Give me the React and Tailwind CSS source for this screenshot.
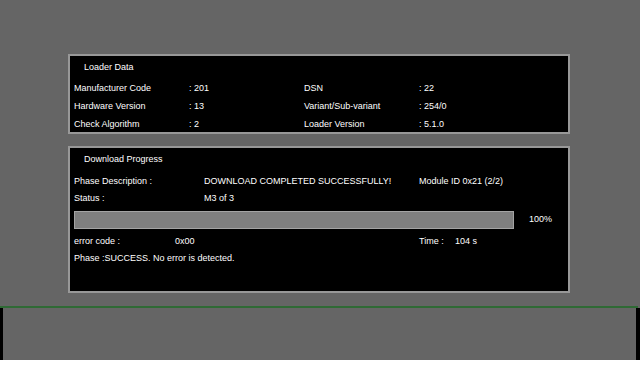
import React from 'react'

const loaderRows = [
  ['Manufacturer Code', ': 201', 'DSN', ': 22'],
  ['Hardware Version', ': 13', 'Variant/Sub-variant', ': 254/0'],
  ['Check Algorithm', ': 2', 'Loader Version', ': 5.1.0'],
]

export default function App() {
  return (
    <div className="w-[640px] h-[392px] bg-white text-[9px] text-white" style={{ fontFamily: '"Liberation Sans", Arial, sans-serif' }}>
      <div className="h-[360px] bg-[#656565] flex flex-col">
        {/* Main screen */}
        <div className="h-[306px] pt-[54px] pl-[68px] flex flex-col gap-[12px]">
          {/* Loader Data */}
          <div className="w-[502px] h-[80px] bg-black border-2 border-[#989898] pt-[4px] pl-[4px] flex flex-col">
            <div className="h-[14px] leading-[14px] pl-[10px]">Loader Data</div>
            <div className="mt-[6px] flex flex-col">
              {loaderRows.map((r) => (
                <div key={r[0]} className="h-[18px] flex items-center">
                  <span className="w-[115px]">{r[0]}</span>
                  <span className="w-[115px]">{r[1]}</span>
                  <span className="w-[115px]">{r[2]}</span>
                  <span>{r[3]}</span>
                </div>
              ))}
            </div>
          </div>

          {/* Download Progress */}
          <div className="w-[502px] h-[147px] bg-black border-2 border-[#989898] pt-[4px] pl-[4px] flex flex-col">
            <div className="h-[14px] leading-[14px] pl-[10px]">Download Progress</div>
            <div className="mt-[7px] h-[17px] flex items-center">
              <span className="w-[130px]">Phase Description :</span>
              <span className="w-[215px]">DOWNLOAD COMPLETED SUCCESSFULLY!</span>
              <span>Module ID 0x21 (2/2)</span>
            </div>
            <div className="h-[17px] flex items-center">
              <span className="w-[130px]">Status :</span>
              <span>M3 of 3</span>
            </div>
            <div className="mt-[4px] h-[18px] flex items-center">
              <div className="w-[440px] h-[18px] bg-[#7f7f7f] border border-[#a4a4a4]"></div>
              <span className="ml-[15px]">100%</span>
            </div>
            <div className="mt-[4px] h-[17px] flex items-center">
              <span className="w-[101px]">error code :</span>
              <span className="w-[244px]">0x00</span>
              <span className="w-[36px]">Time :</span>
              <span>104 s</span>
            </div>
            <div className="h-[17px] flex items-center">Phase :SUCCESS. No error is detected.</div>
          </div>
        </div>

        {/* Lower strip */}
        <div className="h-[2px] bg-[#2f6a35] w-[638px]"></div>
        <div className="flex-1 border-l-[3px] border-r-[4px] border-black"></div>
      </div>
    </div>
  )
}
